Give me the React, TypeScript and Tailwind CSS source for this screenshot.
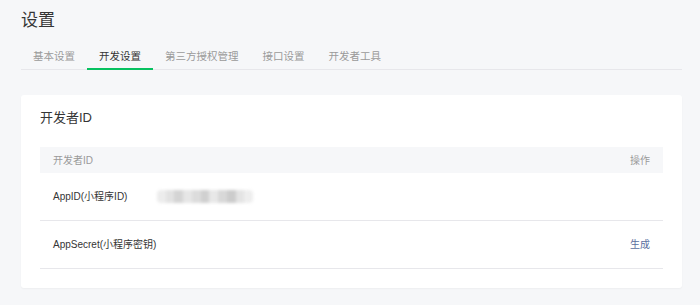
const tabs = ['基本设置', '开发设置', '第三方授权管理', '接口设置', '开发者工具']

function BlurredValue() {
  const shades = ['#ececec', '#e2e2e2', '#d4d4d4', '#e6e6e6', '#dcdcdc', '#d0d0d0', '#e8e8e8', '#d8d8d8', '#cccccc', '#e4e4e4', '#eeeeee']
  return (
    <div className="flex h-[13px] w-[96px] overflow-hidden rounded-[4px] blur-[1.5px]">
      {shades.map((c, i) => (
        <div key={i} className="h-full flex-1" style={{ backgroundColor: c }} />
      ))}
    </div>
  )
}

export default function App() {
  return (
    <div
      className="min-h-screen bg-[#f6f7f9] pl-[21px] pr-[18px] pt-[8px] text-[#353535]"
      style={{ fontFamily: '"Liberation Sans", "Noto Sans CJK SC", sans-serif' }}
    >
      <h1 className="h-[26px] text-[17px] leading-[26px] font-normal">设置</h1>

      <div className="mt-[15px] flex border-b border-[#e7e7eb]">
        {tabs.map((t, i) => (
          <div
            key={t}
            className={`relative px-[12px] pb-[5px] text-[10.5px] leading-[15px] ${
              i === 1 ? 'text-[#353535]' : 'text-[#9a9a9a]'
            }`}
          >
            {t}
            {i === 1 && <div className="absolute inset-x-0 bottom-[-1px] h-[2px] bg-[#07c160]" />}
          </div>
        ))}
      </div>

      <div className="mt-[25px] rounded-[3px] bg-white px-[19px] pt-[13px] pb-[19px] shadow-[0_1px_2px_rgba(0,0,0,0.04)]">
        <h2 className="text-[13px] leading-[20px] font-normal">开发者ID</h2>

        <div className="mt-[19px]">
          <div className="flex h-[26px] items-center justify-between bg-[#f6f7f9] px-[13px] text-[10px] text-[#9a9a9a]">
            <span>开发者ID</span>
            <span>操作</span>
          </div>

          <div className="flex h-[48px] items-center border-b border-[#e7e7eb] px-[13px] text-[10px]">
            <span className="w-[104px]">AppID(小程序ID)</span>
            <BlurredValue />
          </div>

          <div className="flex h-[48px] items-center justify-between border-b border-[#e7e7eb] px-[13px] text-[10px]">
            <span>AppSecret(小程序密钥)</span>
            <a className="cursor-pointer text-[#5a6e9e]">生成</a>
          </div>
        </div>
      </div>
    </div>
  )
}
